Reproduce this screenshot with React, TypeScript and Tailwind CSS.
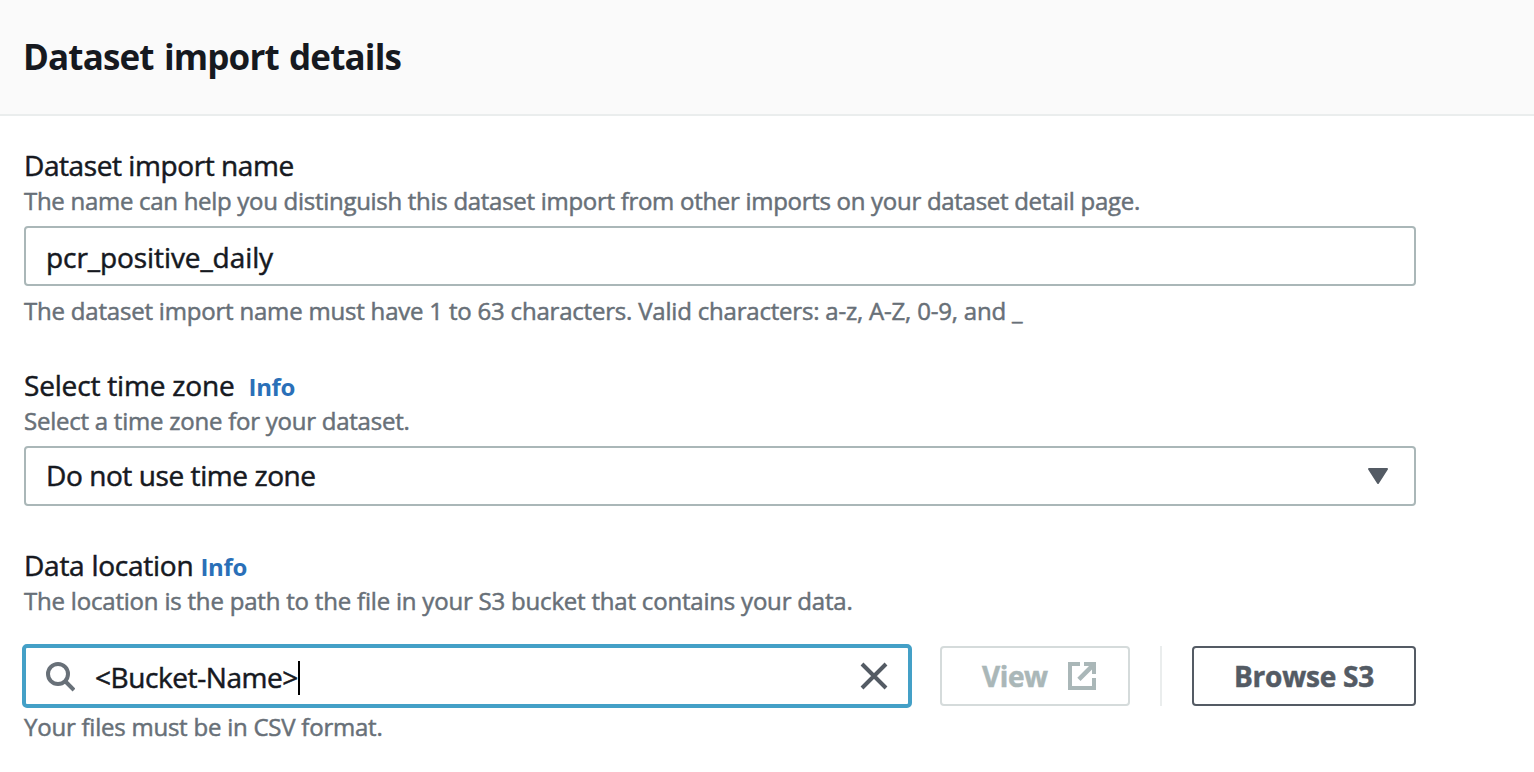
import type { ReactNode } from "react";

function Label({ children, className = "" }: { children: ReactNode; className?: string }) {
  return (
    <div className={`flex h-10 items-center whitespace-nowrap text-[28px] leading-10 text-[#16191f] ${className}`}>
      {children}
    </div>
  );
}

function Hint({ children, className = "" }: { children: ReactNode; className?: string }) {
  return (
    <p className={`h-8 whitespace-nowrap text-2xl leading-8 text-[#687078] ${className}`}>{children}</p>
  );
}

function Info({ className = "" }: { className?: string }) {
  return (
    <a className={`pt-[3px] text-2xl leading-8 font-bold tracking-[-0.3px] text-[#2a70b8] [-webkit-text-stroke:0px] ${className}`}>Info</a>
  );
}

export default function App() {
  return (
    <div className="h-[772px] overflow-hidden bg-white font-['Open_Sans','Noto_Sans',sans-serif]">
      <header className="flex h-[116px] items-center border-b-2 border-[#eaeded] bg-[#fafafa] pt-px pl-[23px]">
        <h1 className="text-[35px] font-bold tracking-[-0.85px] whitespace-nowrap text-[#16191f] [word-spacing:2px]">
          Dataset import details
        </h1>
      </header>

      <main className="w-[1416px] pt-[29px] pl-6 [-webkit-text-stroke:0.5px]">
        <section>
          <Label className="tracking-[-0.42px]">Dataset import name</Label>
          <Hint className="tracking-[-0.29px]">
            The name can help you distinguish this dataset import from other imports on your dataset detail page.
          </Hint>
          <div className="mt-[9px] flex h-[60px] items-center rounded-sm border-2 border-[#aab7b8] pt-0.5 pl-5 text-[28px] tracking-[-0.08px] text-[#16191f]">
            pcr_positive_daily
          </div>
          <Hint className="mt-[9px] tracking-[-0.2px]">
            The dataset import name must have 1 to 63 characters. Valid characters: a-z, A-Z, 0-9, and _
          </Hint>
        </section>

        <section className="mt-[38px]">
          <Label className="tracking-[-0.18px]">
            Select time zone
            <Info className="ml-3.5" />
          </Label>
          <Hint className="tracking-[-0.24px]">Select a time zone for your dataset.</Hint>
          <div className="mt-[9px] flex h-[60px] items-center justify-between rounded-sm border-2 border-[#aab7b8] pr-[25px] pl-5 text-[28px] tracking-[-0.42px] text-[#16191f]">
            <span className="pb-0.5">Do not use time zone</span>
            <svg width="22" height="18" viewBox="0 0 22 18" fill="#545b64" stroke="#545b64" strokeWidth="2" strokeLinejoin="round">
              <path d="M2 2h18L11 16z" />
            </svg>
          </div>
        </section>

        <section className="mt-[39px]">
          <Label className="tracking-[-0.25px]">
            Data location
            <Info className="ml-[7px]" />
          </Label>
          <Hint className="tracking-[-0.2px]">
            The location is the path to the file in your S3 bucket that contains your data.
          </Hint>
          <div className="mt-[27px] flex items-center">
            <div className="-ml-0.5 flex h-16 w-[890px] items-center rounded-[5px] border-4 border-[#44a0c7] pl-[19px]">
              <svg className="mt-px" width="30" height="30" viewBox="0 0 30 30" fill="none" stroke="#687078" strokeWidth="4">
                <circle cx="13" cy="12" r="10" />
                <path d="M20 19l9 9" />
              </svg>
              <span className="ml-5 pt-px text-[28px] tracking-[-0.42px] text-[#16191f]">
                &lt;Bucket-Name&gt;
              </span>
              <span className="mt-[3px] h-[34px] w-0.5 bg-black" />
              <svg className="mr-5 ml-auto" width="28" height="28" viewBox="0 0 28 28" fill="none" stroke="#545b64" strokeWidth="4">
                <path d="M2 2l24 24M26 2L2 26" />
              </svg>
            </div>
            <button className="ml-7 flex h-[60px] w-[190px] items-center rounded-sm border-2 border-[#d5dbdb] pl-10 text-[28px] font-bold tracking-[-0.43px] text-[#aab7b8]">
              View
              <svg className="ml-[19px]" width="30" height="30" viewBox="0 0 30 30">
                <path d="M13 3H3v24h24V17" fill="none" stroke="#aab7b8" strokeWidth="4" />
                <path d="M17 1h12v12h-4V8.500L13.500 20l-3.200-3.200L22 5h-5z" fill="#aab7b8" stroke="none" />
              </svg>
            </button>
            <div className="ml-[30px] h-[60px] w-0.5 bg-[#eaeded]" />
            <button className="ml-[30px] flex h-[60px] w-56 items-center justify-center rounded-sm border-2 border-[#545b64] text-[28px] font-bold tracking-[-0.22px] text-[#545b64]">
              Browse S3
            </button>
          </div>
          <Hint className="mt-[3px] tracking-[-0.23px]">Your files must be in CSV format.</Hint>
        </section>
      </main>
    </div>
  );
}
